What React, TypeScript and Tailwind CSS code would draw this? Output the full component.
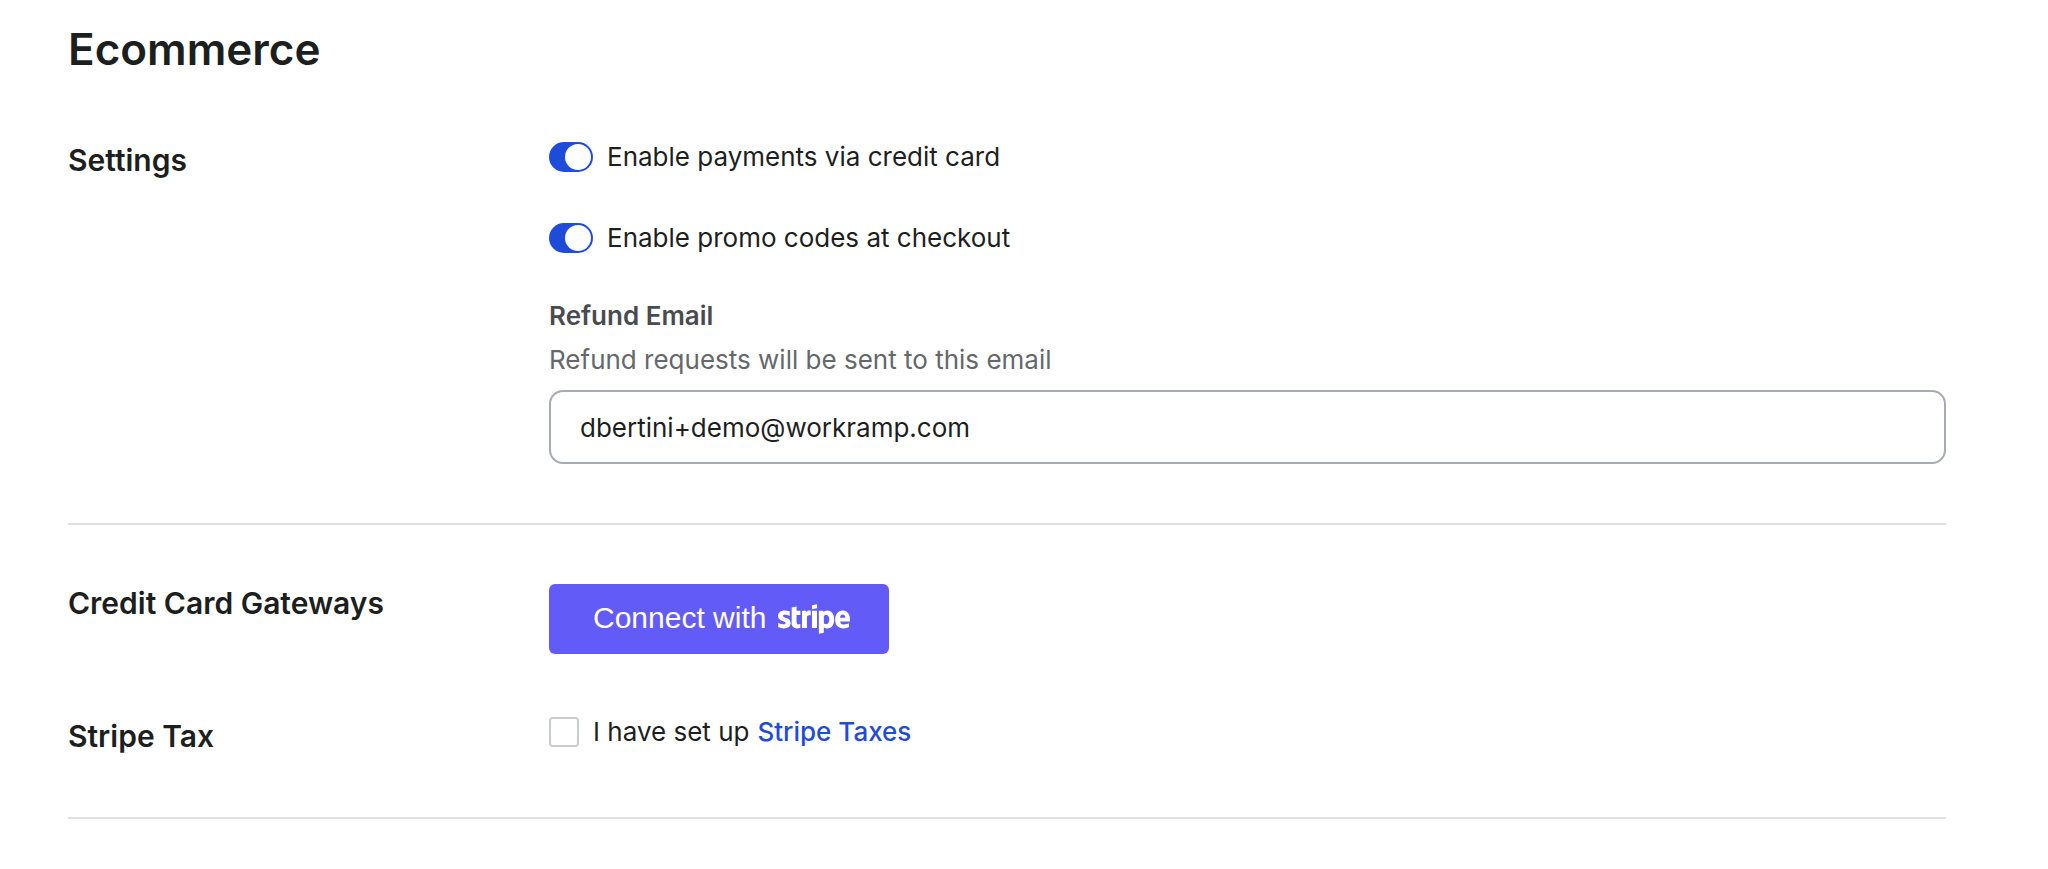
import { useState, type ReactNode } from 'react'
import { FaStripe } from 'react-icons/fa'

function Row({ title, children }: { title: string; children: ReactNode }) {
  return (
    <section className="grid grid-cols-[481px_1fr]">
      <h2 className="text-[30px] leading-[38px] font-semibold">{title}</h2>
      <div>{children}</div>
    </section>
  )
}

function Toggle({ label, checked, onChange }: { label: string; checked: boolean; onChange: (value: boolean) => void }) {
  return (
    <label className="flex w-fit items-center gap-3.5 text-[26px] leading-8">
      <input
        type="checkbox"
        role="switch"
        checked={checked}
        onChange={e => onChange(e.target.checked)}
        className="flex h-[30px] w-11 shrink-0 appearance-none items-center rounded-full bg-gray-300 p-0.5 before:size-[26px] before:rounded-full before:bg-white checked:justify-end checked:bg-[#1f4bdb]"
      />
      {label}
    </label>
  )
}

export default function App() {
  const [payments, setPayments] = useState(true)
  const [promoCodes, setPromoCodes] = useState(true)
  const [email, setEmail] = useState('dbertini+demo@workramp.com')
  const [stripeTax, setStripeTax] = useState(false)

  return (
    <main className="bg-white pt-5 pr-[102px] pb-12 pl-[68px] font-[Inter,sans-serif] text-[#1d1f1e]">
      <h1 className="text-[44px] leading-[58px] font-semibold">Ecommerce</h1>

      <div className="mt-[63px] border-b-2 border-[#e0e1e6] pb-[59px]">
        <Row title="Settings">
          <div className="flex flex-col gap-[49px]">
            <Toggle label="Enable payments via credit card" checked={payments} onChange={setPayments} />
            <Toggle label="Enable promo codes at checkout" checked={promoCodes} onChange={setPromoCodes} />
          </div>
          <label htmlFor="refund-email" className="mt-[46px] block text-[26px] leading-8 font-semibold text-[#4a4b50]">
            Refund Email
          </label>
          <p id="refund-hint" className="mt-3 text-[26px] leading-8 text-[#64686c]">
            Refund requests will be sent to this email
          </p>
          <input
            id="refund-email"
            type="email"
            aria-describedby="refund-hint"
            value={email}
            onChange={e => setEmail(e.target.value)}
            className="mt-3.5 h-[74px] w-full rounded-[14px] border-2 border-[#a6acb2] bg-white px-[29px] text-[26px]"
          />
        </Row>
      </div>

      <div className="flex flex-col gap-[63px] border-b-2 border-[#e0e1e6] pt-[59px] pb-[62px]">
        <Row title="Credit Card Gateways">
          <button
            type="button"
            aria-label="Connect with Stripe"
            className="flex h-[70px] w-[340px] items-center gap-3 rounded-md bg-[#635bf7] pb-1 pl-11 font-['Liberation_Sans',sans-serif] text-[30px] text-white"
          >
            Connect with
            <FaStripe className="mt-1 h-[58px] w-[72px]" />
          </button>
        </Row>
        <Row title="Stripe Tax">
          <div className="flex items-center text-[26px] leading-[30px]">
            <input
              id="stripe-tax"
              type="checkbox"
              checked={stripeTax}
              onChange={e => setStripeTax(e.target.checked)}
              className="size-[30px] shrink-0 appearance-none rounded-sm border-2 border-[#c8ccd1] checked:bg-[#1f4bdb]"
            />
            <label htmlFor="stripe-tax" className="ml-3.5">I have set up</label>
            <a href="#stripe-taxes" className="ml-2 font-medium text-[#1f4bdb]">Stripe Taxes</a>
          </div>
        </Row>
      </div>
    </main>
  )
}
